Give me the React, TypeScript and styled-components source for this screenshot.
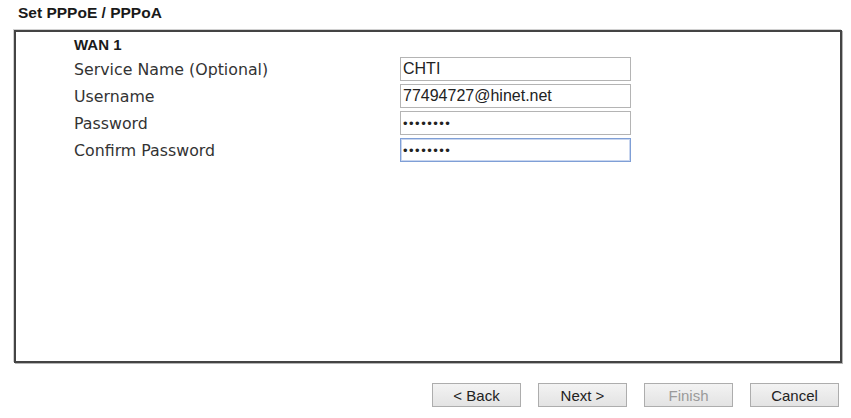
import styled, { createGlobalStyle } from 'styled-components';

const GlobalStyle = createGlobalStyle`
  html, body {
    margin: 0;
    padding: 0;
    background: #ffffff;
  }
  body {
    font-family: "Liberation Sans", Arial, sans-serif;
    color: #222;
  }
`;

const Page = styled.div`
  width: 851px;
  height: 418px;
  overflow: hidden;
`;

const Title = styled.div`
  padding: 4px 0 0 18px;
  height: 26px;
  box-sizing: border-box;
  font-size: 15.5px;
  line-height: 18px;
  font-weight: bold;
  color: #1a1a1a;
`;

const Panel = styled.div`
  margin-left: 14px;
  width: 828px;
  height: 333px;
  box-sizing: border-box;
  border: 2px solid #444;
  box-shadow: 1px 1px 0 #b5b5b5, -1px -1px 0 #d0d0d0;
  padding: 3px 0 0 58px;
  margin-top: 4px;
`;

const Form = styled.div`
  display: grid;
  grid-template-columns: 326px 231px;
  grid-template-rows: 19px;
  grid-auto-rows: 24px;
  row-gap: 3px;
  align-items: center;
`;

const Heading = styled.div`
  grid-column: 1 / -1;
  font-size: 15px;
  line-height: 19px;
  font-weight: bold;
  color: #1a1a1a;
`;

const Label = styled.div`
  font-family: "DejaVu Sans", Verdana, sans-serif;
  font-size: 15.8px;
  color: #333;
  white-space: nowrap;
`;

const Field = styled.input<{ $focused?: boolean; $dots?: boolean }>`
  width: 231px;
  height: 24px;
  box-sizing: border-box;
  margin: 0;
  padding: 0 2px;
  border: 1px solid ${({ $focused }) => ($focused ? '#7f9fd6' : '#b4b4b4')};
  box-shadow: ${({ $focused }) => ($focused ? 'inset 0 0 0 1px #c9d6ef' : 'none')};
  outline: none;
  background: #fff;
  font-family: "Liberation Sans", Arial, sans-serif;
  font-size: ${({ $dots }) => ($dots ? '13px' : '16px')};
  letter-spacing: ${({ $dots }) => ($dots ? '1.5px' : '0')};
  color: #222;
`;

const ButtonBar = styled.div`
  display: flex;
  justify-content: flex-end;
  gap: 17px;
  margin-top: 20px;
  padding-right: 12px;
`;

const Button = styled.button<{ $disabled?: boolean }>`
  width: 89px;
  height: 24px;
  box-sizing: border-box;
  border: 1px solid #adadad;
  border-radius: 0;
  background: linear-gradient(#f3f3f3, #e3e3e3);
  font-family: "Liberation Sans", Arial, sans-serif;
  font-size: 15px;
  color: ${({ $disabled }) => ($disabled ? '#9a9a9a' : '#222')};
  padding: 0;
`;

export default function App() {
  const fields = [
    { label: 'Service Name (Optional)', value: 'CHTI' },
    { label: 'Username', value: '77494727@hinet.net' },
    { label: 'Password', value: '••••••••', dots: true },
    { label: 'Confirm Password', value: '••••••••', dots: true, focused: true },
  ];

  return (
    <Page>
      <GlobalStyle />
      <Title>Set PPPoE / PPPoA</Title>
      <Panel>
        <Form>
          <Heading>WAN 1</Heading>
          {fields.flatMap((f) => [
            <Label key={f.label + '-l'}>{f.label}</Label>,
            <Field
              key={f.label + '-f'}
              readOnly
              value={f.value}
              $dots={f.dots}
              $focused={f.focused}
            />,
          ])}
        </Form>
      </Panel>
      <ButtonBar>
        <Button>&lt; Back</Button>
        <Button>Next &gt;</Button>
        <Button $disabled>Finish</Button>
        <Button>Cancel</Button>
      </ButtonBar>
    </Page>
  );
}
